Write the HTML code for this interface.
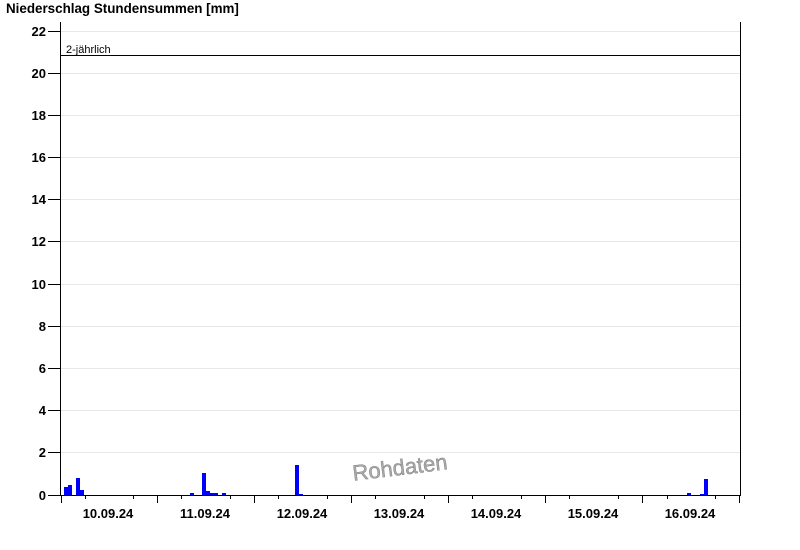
<!DOCTYPE html>
<html><head><style>html,body{margin:0;padding:0;background:#fff}svg{display:block}</style></head>
<body>
<svg width="800" height="550" xmlns="http://www.w3.org/2000/svg" font-family="Liberation Sans, Arial, sans-serif">
<rect width="800" height="550" fill="#fff"/>
<text x="6" y="13" font-size="13.4" font-weight="bold" fill="#000">Niederschlag Stundensummen [mm]</text>
<g stroke="#e8e8e8" stroke-width="1">
<line x1="61" x2="740" y1="31.5" y2="31.5"/>
<line x1="61" x2="740" y1="73.5" y2="73.5"/>
<line x1="61" x2="740" y1="115.5" y2="115.5"/>
<line x1="61" x2="740" y1="157.5" y2="157.5"/>
<line x1="61" x2="740" y1="199.5" y2="199.5"/>
<line x1="61" x2="740" y1="241.5" y2="241.5"/>
<line x1="61" x2="740" y1="284.5" y2="284.5"/>
<line x1="61" x2="740" y1="326.5" y2="326.5"/>
<line x1="61" x2="740" y1="368.5" y2="368.5"/>
<line x1="61" x2="740" y1="410.5" y2="410.5"/>
<line x1="61" x2="740" y1="452.5" y2="452.5"/>
</g>
<g stroke="#000" stroke-width="1">
<line x1="48" x2="60" y1="31.5" y2="31.5"/>
<line x1="48" x2="60" y1="73.5" y2="73.5"/>
<line x1="48" x2="60" y1="115.5" y2="115.5"/>
<line x1="48" x2="60" y1="157.5" y2="157.5"/>
<line x1="48" x2="60" y1="199.5" y2="199.5"/>
<line x1="48" x2="60" y1="241.5" y2="241.5"/>
<line x1="48" x2="60" y1="284.5" y2="284.5"/>
<line x1="48" x2="60" y1="326.5" y2="326.5"/>
<line x1="48" x2="60" y1="368.5" y2="368.5"/>
<line x1="48" x2="60" y1="410.5" y2="410.5"/>
<line x1="48" x2="60" y1="452.5" y2="452.5"/>
<line x1="48" x2="60" y1="495.5" y2="495.5"/>
</g>
<g font-size="13" font-weight="bold" text-anchor="end" fill="#000">
<text x="46" y="36">22</text><text x="46" y="78">20</text><text x="46" y="120">18</text>
<text x="46" y="162">16</text><text x="46" y="204">14</text><text x="46" y="246">12</text>
<text x="46" y="289">10</text><text x="46" y="331">8</text><text x="46" y="373">6</text>
<text x="46" y="415">4</text><text x="46" y="457">2</text><text x="46" y="500">0</text>
</g>
<g fill="#0000ff">
<rect x="64" y="487" width="4" height="8"/>
<rect x="68" y="485" width="4" height="10"/>
<rect x="76" y="478" width="4" height="17"/>
<rect x="80" y="490" width="4" height="5"/>
<rect x="190" y="493" width="4" height="2"/>
<rect x="202" y="473" width="4" height="22"/>
<rect x="206" y="491" width="4" height="4"/>
<rect x="210" y="493" width="8" height="2"/>
<rect x="222" y="493" width="4" height="2"/>
<rect x="295" y="465" width="4" height="30"/>
<rect x="299" y="494" width="4" height="1"/>
<rect x="687" y="493" width="4" height="2"/>
<rect x="700" y="494" width="4" height="1"/>
<rect x="704" y="479" width="4" height="16"/>
</g>
<text x="66" y="53" font-size="11" fill="#000">2-jährlich</text>
<line x1="61" x2="740" y1="55.5" y2="55.5" stroke="#000" stroke-width="1"/>
<text x="400" y="475" font-size="22" fill="#aaa" stroke="#777" stroke-width="0.4" text-anchor="middle" transform="rotate(-7 400 468)">Rohdaten</text>
<g stroke="#000" stroke-width="1">
<line x1="60.5" x2="60.5" y1="22" y2="496"/>
<line x1="740.5" x2="740.5" y1="22" y2="496"/>
<line x1="60" x2="741" y1="495.5" y2="495.5"/>
<line x1="61.5" x2="61.5" y1="495" y2="503"/>
<line x1="157.5" x2="157.5" y1="495" y2="503"/>
<line x1="254.5" x2="254.5" y1="495" y2="503"/>
<line x1="351.5" x2="351.5" y1="495" y2="503"/>
<line x1="448.5" x2="448.5" y1="495" y2="503"/>
<line x1="545.5" x2="545.5" y1="495" y2="503"/>
<line x1="642.5" x2="642.5" y1="495" y2="503"/>
<line x1="739.5" x2="739.5" y1="495" y2="503"/>
<line x1="85.5" x2="85.5" y1="495" y2="499"/><line x1="133.5" x2="133.5" y1="495" y2="499"/>
<line x1="181.5" x2="181.5" y1="495" y2="499"/><line x1="230.5" x2="230.5" y1="495" y2="499"/>
<line x1="278.5" x2="278.5" y1="495" y2="499"/><line x1="327.5" x2="327.5" y1="495" y2="499"/>
<line x1="375.5" x2="375.5" y1="495" y2="499"/><line x1="424.5" x2="424.5" y1="495" y2="499"/>
<line x1="472.5" x2="472.5" y1="495" y2="499"/><line x1="521.5" x2="521.5" y1="495" y2="499"/>
<line x1="569.5" x2="569.5" y1="495" y2="499"/><line x1="618.5" x2="618.5" y1="495" y2="499"/>
<line x1="667.5" x2="667.5" y1="495" y2="499"/><line x1="715.5" x2="715.5" y1="495" y2="499"/>
</g>
<g font-size="13" font-weight="bold" text-anchor="middle" fill="#000">
<text x="108" y="518">10.09.24</text><text x="205" y="518">11.09.24</text>
<text x="302" y="518">12.09.24</text><text x="399" y="518">13.09.24</text>
<text x="496" y="518">14.09.24</text><text x="593" y="518">15.09.24</text>
<text x="690" y="518">16.09.24</text>
</g>
</svg>
</body></html>
